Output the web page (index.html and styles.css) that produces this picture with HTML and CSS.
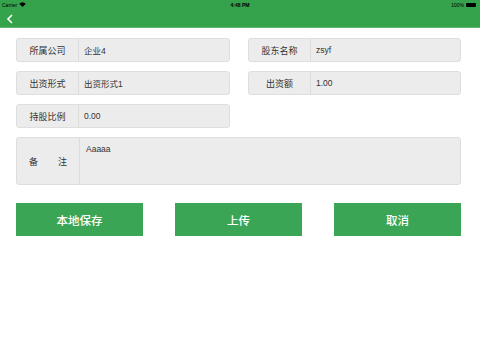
FILE: index.html
```html
<!DOCTYPE html>
<html lang="zh">
<head>
  <meta charset="UTF-8">
  <title>股东信息</title>
  <link rel="stylesheet" href="styles.css">
</head>
<body>

<div class="header">
  <div class="status-bar">
    <span class="carrier">Carrier
      <svg class="wifi" width="7" height="5" viewBox="0 0 14 10"><path d="M7 10 L0.5 3.5 A9.5 9.5 0 0 1 13.5 3.5 Z" fill="#000"/></svg>
    </span>
    <span class="time">4:48 PM</span>
    <span class="battery">100%
      <span class="battery-icon"></span>
    </span>
  </div>
  <div class="nav-bar">
    <svg class="back" width="8" height="10" viewBox="0 0 8 10"><path d="M6 1 L2 5 L6 9" fill="none" stroke="#fff" stroke-width="1.6"/></svg>
  </div>
</div>

<div class="content">
  <div class="form-grid">
    <div class="field">
      <div class="label">所属公司</div>
      <div class="value">企业4</div>
    </div>
    <div class="field">
      <div class="label">股东名称</div>
      <div class="value">zsyf</div>
    </div>
    <div class="field">
      <div class="label">出资形式</div>
      <div class="value">出资形式1</div>
    </div>
    <div class="field">
      <div class="label">出资额</div>
      <div class="value">1.00</div>
    </div>
    <div class="field">
      <div class="label">持股比例</div>
      <div class="value">0.00</div>
    </div>
  </div>

  <div class="field remark">
    <div class="label">备<span class="spacer"></span>注</div>
    <div class="value">Aaaaa</div>
  </div>

  <div class="buttons">
    <button class="btn">本地保存</button>
    <button class="btn">上传</button>
    <button class="btn">取消</button>
  </div>
</div>

</body>
</html>
```

FILE: styles.css
```css
body {
  margin: 0;
  font-family: "Liberation Sans", "Noto Sans CJK SC", sans-serif;
  background: #fff;
  width: 480px;
  height: 360px;
  overflow: hidden;
}

.header {
  background: #35a24c;
  height: 27px;
  border-bottom: 1px solid #62b974;
}

.status-bar {
  height: 9px;
  display: flex;
  justify-content: space-between;
  align-items: center;
  font-size: 5px;
  color: #000;
  padding: 0 4px 0 2px;
  position: relative;
}

.carrier, .battery {
  display: flex;
  align-items: center;
  gap: 2px;
}

.time {
  position: absolute;
  left: 0;
  right: 0;
  text-align: center;
  font-weight: bold;
}

.battery-icon {
  width: 10px;
  height: 4px;
  background: #000;
  border-radius: 1px;
}

.nav-bar {
  height: 18px;
  display: flex;
  align-items: center;
  padding-left: 6px;
  padding-top: 2px;
  box-sizing: border-box;
}

.content {
  padding: 10px 19px 0 16px;
}

.form-grid {
  display: grid;
  grid-template-columns: 214px 213px;
  column-gap: 18px;
  row-gap: 9px;
}

.field {
  display: flex;
  height: 24px;
  background: #ececec;
  border: 1px solid #dedede;
  border-radius: 3px;
  box-sizing: border-box;
  font-size: 8.5px;
  color: #333;
}

.label {
  width: 61px;
  flex-shrink: 0;
  border-right: 1px solid #dcdcdc;
  display: flex;
  align-items: center;
  justify-content: center;
  font-size: 9px;
}

.value {
  display: flex;
  align-items: center;
  padding-left: 5px;
}

.remark {
  margin-top: 9px;
  height: 48px;
}

.remark .label {
  width: 62px;
}

.remark .spacer {
  width: 20px;
}

.remark .value {
  align-items: flex-start;
  padding-top: 6px;
  padding-left: 6px;
}

.buttons {
  display: flex;
  justify-content: space-between;
  margin-top: 18px;
}

.btn {
  width: 127px;
  height: 33px;
  background: #3aa655;
  border: none;
  color: #fff;
  font-family: inherit;
  font-size: 11.5px;
  font-weight: 500;
  padding: 0;
}
```
